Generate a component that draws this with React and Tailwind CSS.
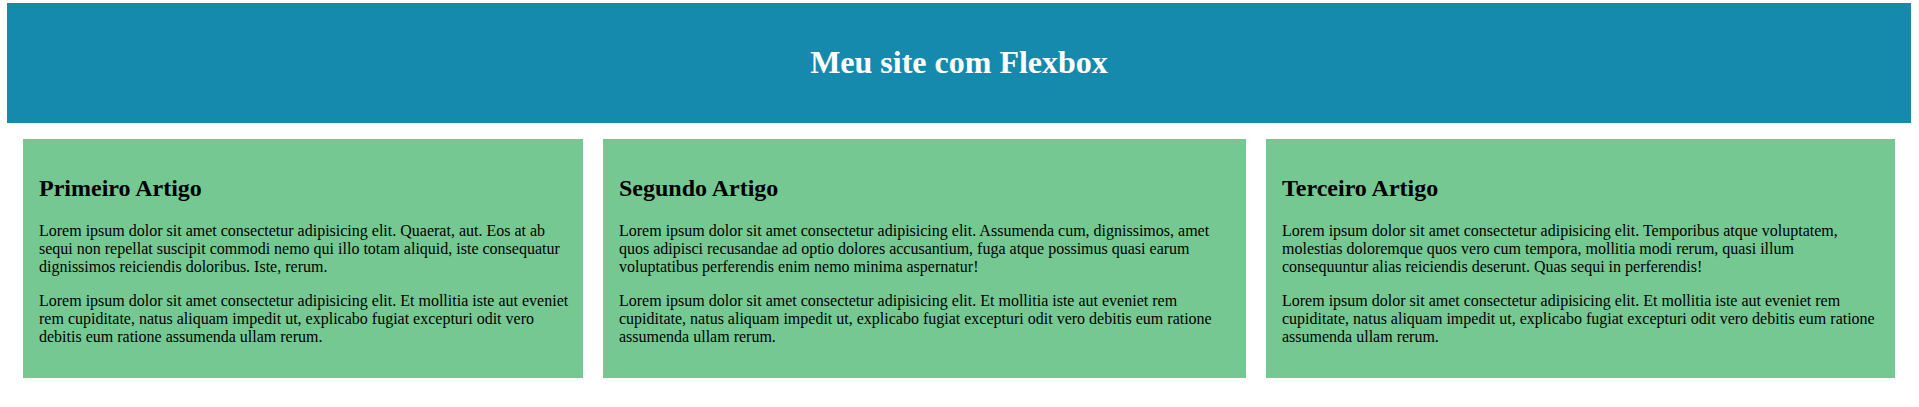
const artigos = [
  {
    titulo: 'Primeiro Artigo',
    caixa: 'w-[560px] pr-[4px]',
    textos: [
      'Lorem ipsum dolor sit amet consectetur adipisicing elit. Quaerat, aut. Eos at ab sequi non repellat suscipit commodi nemo qui illo totam aliquid, iste consequatur dignissimos reiciendis doloribus. Iste, rerum.',
      'Lorem ipsum dolor sit amet consectetur adipisicing elit. Et mollitia iste aut eveniet rem cupiditate, natus aliquam impedit ut, explicabo fugiat excepturi odit vero debitis eum ratione assumenda ullam rerum.',
    ],
  },
  {
    titulo: 'Segundo Artigo',
    caixa: 'w-[643px] pr-4',
    textos: [
      'Lorem ipsum dolor sit amet consectetur adipisicing elit. Assumenda cum, dignissimos, amet quos adipisci recusandae ad optio dolores accusantium, fuga atque possimus quasi earum voluptatibus perferendis enim nemo minima aspernatur!',
      'Lorem ipsum dolor sit amet consectetur adipisicing elit. Et mollitia iste aut eveniet rem cupiditate, natus aliquam impedit ut, explicabo fugiat excepturi odit vero debitis eum ratione assumenda ullam rerum.',
    ],
  },
  {
    titulo: 'Terceiro Artigo',
    caixa: 'w-[629px] pr-4',
    textos: [
      'Lorem ipsum dolor sit amet consectetur adipisicing elit. Temporibus atque voluptatem, molestias doloremque quos vero cum tempora, mollitia modi rerum, quasi illum consequuntur alias reiciendis deserunt. Quas sequi in perferendis!',
      'Lorem ipsum dolor sit amet consectetur adipisicing elit. Et mollitia iste aut eveniet rem cupiditate, natus aliquam impedit ut, explicabo fugiat excepturi odit vero debitis eum ratione assumenda ullam rerum.',
    ],
  },
]

export default function App() {
  return (
    <div className="bg-white pt-[3px] pl-[7px] pr-[8px] font-['Liberation_Serif','Times_New_Roman',serif] text-black">
      {/* Cabeçalho */}
      <header className="bg-[#168aad] py-5">
        <h1 className="my-[21.44px] text-center text-[32px] leading-[36.8px] font-bold text-white">
          Meu site com Flexbox
        </h1>
      </header>

      {/* Artigos */}
      <main className="flex gap-5 px-4 pt-4">
        {artigos.map(({ titulo, caixa, textos }) => (
          <article key={titulo} className={`${caixa} shrink-0 bg-[#76c893] pl-4 py-4`}>
            <h2 className="my-[19.92px] text-[24px] leading-[27.6px] font-bold">{titulo}</h2>
            {textos.map((t, i) => (
              <p key={i} className={`text-[16px] leading-[18px] mb-4 ${i > 0 ? 'mt-4' : ''}`}>
                {t}
              </p>
            ))}
          </article>
        ))}
      </main>
    </div>
  )
}
